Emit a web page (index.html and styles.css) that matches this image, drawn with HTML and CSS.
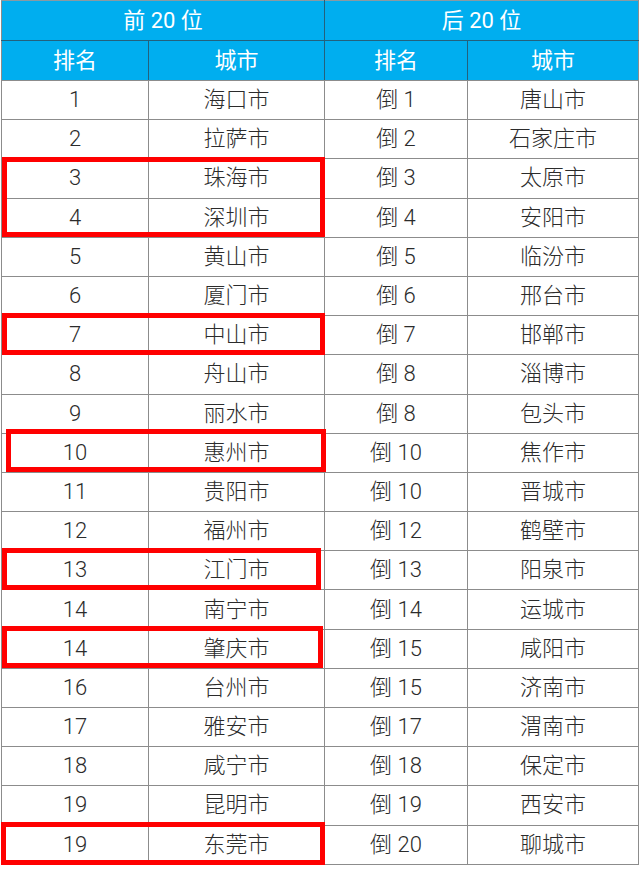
FILE: index.html
```html
<!DOCTYPE html>
<html lang="zh-CN">
<head>
<meta charset="utf-8">
<title>排名</title>
<link rel="stylesheet" href="styles.css">
</head>
<body>
<div class="wrap">
  <table class="rank">
    <colgroup>
      <col class="c1"><col class="c2"><col class="c3"><col class="c4">
    </colgroup>
    <thead>
      <tr class="h1"><th colspan="2">前 20 位</th><th colspan="2">后 20 位</th></tr>
      <tr class="h2"><th>排名</th><th>城市</th><th>排名</th><th>城市</th></tr>
    </thead>
    <tbody>
      <tr><td>1</td><td>海口市</td><td>倒 1</td><td>唐山市</td></tr>
      <tr><td>2</td><td>拉萨市</td><td>倒 2</td><td>石家庄市</td></tr>
      <tr><td>3</td><td>珠海市</td><td>倒 3</td><td>太原市</td></tr>
      <tr><td>4</td><td>深圳市</td><td>倒 4</td><td>安阳市</td></tr>
      <tr><td>5</td><td>黄山市</td><td>倒 5</td><td>临汾市</td></tr>
      <tr><td>6</td><td>厦门市</td><td>倒 6</td><td>邢台市</td></tr>
      <tr><td>7</td><td>中山市</td><td>倒 7</td><td>邯郸市</td></tr>
      <tr><td>8</td><td>舟山市</td><td>倒 8</td><td>淄博市</td></tr>
      <tr><td>9</td><td>丽水市</td><td>倒 8</td><td>包头市</td></tr>
      <tr><td>10</td><td>惠州市</td><td>倒 10</td><td>焦作市</td></tr>
      <tr><td>11</td><td>贵阳市</td><td>倒 10</td><td>晋城市</td></tr>
      <tr><td>12</td><td>福州市</td><td>倒 12</td><td>鹤壁市</td></tr>
      <tr><td>13</td><td>江门市</td><td>倒 13</td><td>阳泉市</td></tr>
      <tr><td>14</td><td>南宁市</td><td>倒 14</td><td>运城市</td></tr>
      <tr><td>14</td><td>肇庆市</td><td>倒 15</td><td>咸阳市</td></tr>
      <tr><td>16</td><td>台州市</td><td>倒 15</td><td>济南市</td></tr>
      <tr><td>17</td><td>雅安市</td><td>倒 17</td><td>渭南市</td></tr>
      <tr><td>18</td><td>咸宁市</td><td>倒 18</td><td>保定市</td></tr>
      <tr><td>19</td><td>昆明市</td><td>倒 19</td><td>西安市</td></tr>
      <tr><td>19</td><td>东莞市</td><td>倒 20</td><td>聊城市</td></tr>
    </tbody>
  </table>
  <div class="mark mark-a"></div>
  <div class="mark mark-b"></div>
  <div class="mark mark-c"></div>
  <div class="mark mark-d"></div>
  <div class="mark mark-e"></div>
  <div class="mark mark-f"></div>
</div>
</body>
</html>
```

FILE: styles.css
```css
html, body {
  margin: 0;
  padding: 0;
  background: #ffffff;
}

.wrap {
  position: relative;
  width: 640px;
  height: 869px;
}

.rank {
  margin-left: 1px;
  width: 637px;
  border-collapse: collapse;
  table-layout: fixed;
  font-family: Roboto, "Noto Sans CJK SC", sans-serif;
  font-weight: 300;
  font-size: 22px;
  color: #2b2b2b;
}

.c1 { width: 147px; }
.c2 { width: 176px; }
.c3 { width: 143px; }
.c4 { width: 171px; }

.rank th {
  background: #00aeef;
  color: #ffffff;
  font-weight: 400;
  height: 39px;
  padding: 0;
  text-align: center;
  border: 1px solid #23617c;
  line-height: 1;
}

.rank .h1 th {
  border-top: 1px solid #8a9aa2;
}

.rank .h2 th {
  border-bottom: 1px solid #8c8c8c;
}

.rank td {
  height: 38.2px;
  padding: 0;
  text-align: center;
  border: 1px solid #8c8c8c;
  line-height: 1;
}

.rank thead tr:first-child th:first-child,
.rank thead tr:last-child th:first-child {
  border-left-color: #8c8c8c;
}

.rank thead th:last-child {
  border-right-color: #8c8c8c;
}

.mark {
  position: absolute;
  border: 5px solid #ff0000;
  box-sizing: border-box;
}

.mark-a { left: 2px; top: 157px; width: 323px; height: 80px; }
.mark-b { left: 2px; top: 313px; width: 323px; height: 42px; }
.mark-c { left: 6px; top: 429px; width: 320px; height: 43px; }
.mark-d { left: 2px; top: 548px; width: 319px; height: 42px; }
.mark-e { left: 2px; top: 626px; width: 321px; height: 42px; }
.mark-f { left: 1px; top: 822px; width: 324px; height: 43px; }
```
